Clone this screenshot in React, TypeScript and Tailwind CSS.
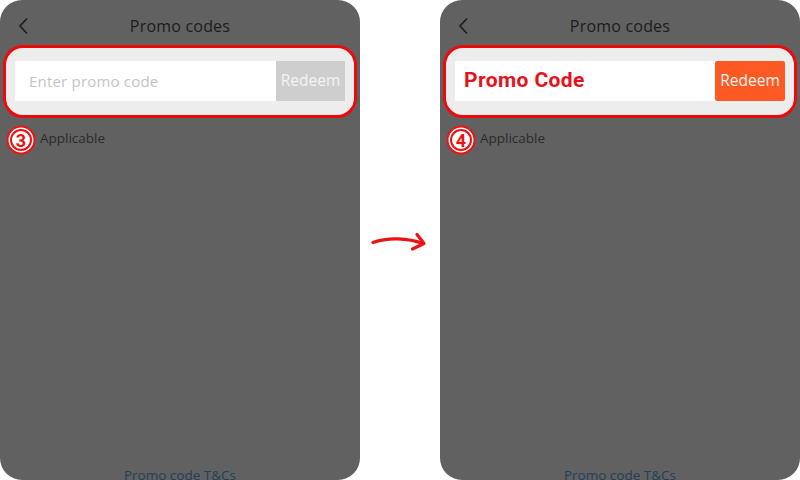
import React from 'react';

const font = { fontFamily: '"Open Sans", "Liberation Sans", sans-serif' };

// Annotation badge: red ring, white gap, red ring, red digit
const StepBadge: React.FC<{ n: string }> = ({ n }) => (
  <svg width="30" height="30" viewBox="0 0 30 30" className="absolute left-[6px] top-[-3px]">
    <circle cx="15" cy="15" r="14.5" fill="#ee1111" />
    <circle cx="15" cy="15" r="12.5" fill="#ffffff" />
    <circle cx="15" cy="15" r="10" fill="#ffffff" stroke="#ee1111" strokeWidth="2" />
    <text
      x="15"
      y="21.5"
      textAnchor="middle"
      fontSize="18"
      fontWeight="700"
      fill="#ee1111"
      fontFamily="Roboto, sans-serif"
    >
      {n}
    </text>
  </svg>
);

const Phone: React.FC<{ filled: boolean; step: string }> = ({ filled, step }) => (
  <div className="relative flex h-[480px] w-[360px] shrink-0 flex-col overflow-hidden rounded-[22px] bg-[#616161]" style={font}>
    {/* header */}
    <div className="relative flex h-[45px] items-center justify-center pt-[6px]">
      <svg width="14" height="18" viewBox="0 0 14 18" className="absolute left-[17px] top-[17px]">
        <path d="M10 1.5 L3 9 L10 16.5" fill="none" stroke="#1c1c1c" strokeWidth="1.6" />
      </svg>
      <span className="text-[16px] font-medium tracking-[0.2px] text-[#1c1c1c]">Promo codes</span>
    </div>

    {/* highlighted input */}
    <div className="mx-[3px] rounded-[20px] border-[3px] border-[#ee0a0a] bg-[#ededed] px-[9px] pb-[14px] pt-[13px]">
      <div className="flex h-[40px] bg-white">
        {filled ? (
          <div
            className="flex flex-1 items-center pl-[9px] text-[21px] font-bold tracking-[0.4px] text-[#e8101a]"
            style={{ fontFamily: 'Roboto, "Liberation Sans", sans-serif' }}
          >
            Promo Code
          </div>
        ) : (
          <div className="flex flex-1 items-center pl-[14px] text-[15px] tracking-[0.2px] text-[#c4c4c4]">Enter promo code</div>
        )}
        <div
          className={
            filled
              ? 'flex w-[70px] items-center justify-center rounded-[2px] bg-[#fb5a25] text-[15.5px] text-[#fff4ee]'
              : 'flex w-[69px] items-center justify-center bg-[#cecece] text-[15.5px] text-[#f4f4f4]'
          }
        >
          Redeem
        </div>
      </div>
    </div>

    {/* applicable row */}
    <div className="relative mt-[10px] h-[20px] pl-[40px] text-[13.5px] text-[#2a2a2a]">
      Applicable
      <StepBadge n={step} />
    </div>

    <div className="flex-1" />
    <div className="flex h-[15px] justify-center text-[13.5px] leading-[20px] text-[#1f3f5a]">Promo code T&amp;Cs</div>
  </div>
);

export default function App() {
  return (
    <div className="flex h-[480px] w-[800px] bg-white">
      <Phone filled={false} step="3" />
      <div className="flex flex-1 items-center justify-center">
        <svg width="80" height="60" viewBox="0 0 80 60">
          <path d="M13 32.5 C 28 27, 48 28, 63 33.5" fill="none" stroke="#ee1111" strokeWidth="3.2" strokeLinecap="round" />
          <path d="M57 24.5 L 64 33.5 L 52.5 39" fill="none" stroke="#ee1111" strokeWidth="3.2" strokeLinecap="round" strokeLinejoin="round" />
        </svg>
      </div>
      <Phone filled step="4" />
    </div>
  );
}
